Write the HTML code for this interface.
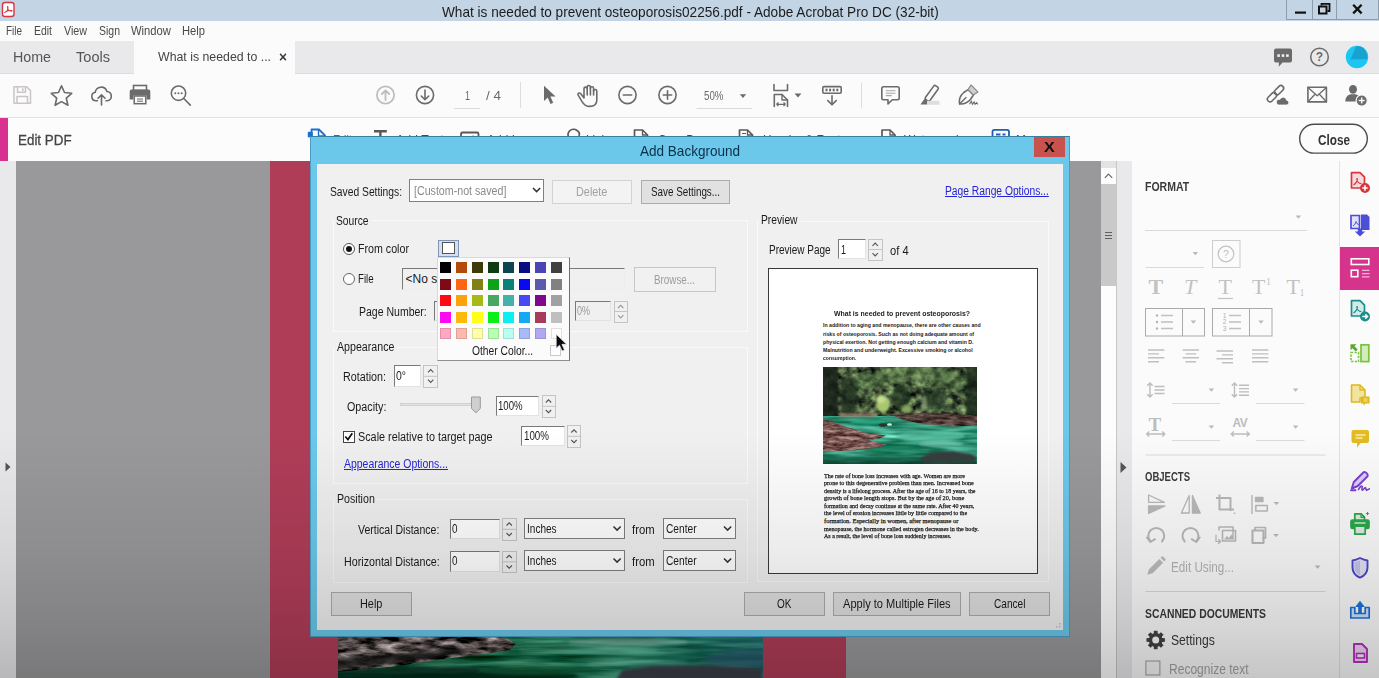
<!DOCTYPE html>
<html lang="en"><head><meta charset="utf-8"><title>Add Background</title>
<style>
html,body{margin:0;padding:0}
body{width:1379px;height:678px;overflow:hidden;position:relative;background:#99999b;font-family:"Liberation Sans",sans-serif;color:#333}
.a{position:absolute}
.t{position:absolute;white-space:nowrap;line-height:16px;height:16px;font-size:12px;transform-origin:0 50%}
svg{position:absolute;overflow:visible}
.ic{fill:none;stroke:#6b6b6b;stroke-width:1.6;stroke-linecap:round;stroke-linejoin:round}
.dl{color:#1a1a1a}
.btn{position:absolute;box-sizing:border-box;border:1px solid #acacac;background:#e1e1e1;text-align:center;font-size:12px;color:#1a1a1a}
.inp{position:absolute;box-sizing:border-box;background:#fff;border:1px solid #e3e3e3;border-top-color:#7a7a7a;border-left-color:#7a7a7a}
.sel{position:absolute;box-sizing:border-box;background:#fff;border:1px solid #7f7f86}
.spin{position:absolute;box-sizing:border-box;border:1px solid #c4c4c4;background:#f0f0f0}
.grp{position:absolute;box-sizing:border-box;border:1px solid #fafafa;box-shadow:inset 0 0 0 0 #ddd}
</style></head><body>

<!-- ===== title bar ===== -->
<div class="a" id="titlebar" style="left:0;top:0;width:1379px;height:21px;background:#c3d4e4"></div>
<!-- ===== menu bar ===== -->
<div class="a" id="menubar" style="left:0;top:21px;width:1379px;height:20px;background:#fbfbfb"></div>
<!-- ===== tab bar ===== -->
<div class="a" id="tabbar" style="left:0;top:41px;width:1379px;height:33px;background:#e9e9eb;border-bottom:1px solid #dcdcde;box-sizing:border-box"></div>
<div class="a" id="activetab" style="left:134px;top:41px;width:161px;height:33px;background:#fbfbfb"></div>
<!-- ===== toolbar ===== -->
<div class="a" id="toolbar" style="left:0;top:74px;width:1379px;height:43px;background:#fbfbfb"></div>
<div class="a" style="left:0;top:117px;width:1379px;height:1px;background:#e2e2e2"></div>
<!-- ===== edit pdf bar ===== -->
<div class="a" id="editbar" style="left:0;top:118px;width:1379px;height:43px;background:#fcfcfc"></div>
<div class="a" style="left:0;top:117.500px;width:8.400px;height:43px;background:#d9318f"></div>

<!-- ===== document area ===== -->
<div class="a" id="leftstrip" style="left:0;top:161px;width:16px;height:517px;background:#e9e8eb"></div>
<div class="a" id="page" style="left:270px;top:161px;width:576px;height:517px;background:#b03d58"></div>

<svg id="docphoto" class="a" style="left:338px;top:630px;overflow:hidden" width="425" height="48" viewBox="0 0 425 48">
<defs>
<filter id="bl3" x="-5%" y="-30%" width="110%" height="160%"><feGaussianBlur stdDeviation="1.600"/></filter>
<filter id="bl4" x="-5%" y="-30%" width="110%" height="160%"><feGaussianBlur stdDeviation="0.700"/></filter>
<filter id="water2" color-interpolation-filters="sRGB" x="0" y="0" width="100%" height="100%"><feTurbulence type="fractalNoise" baseFrequency="0.012 0.16" numOctaves="3" seed="9"/><feColorMatrix type="matrix" values="0.9 0 0 0 -0.33  0.95 0 0 0 0.0  0.9 0 0 0 -0.12  0 0 0 0 1"/></filter>
<filter id="rock2" color-interpolation-filters="sRGB" x="0" y="0" width="100%" height="100%"><feTurbulence type="fractalNoise" baseFrequency="0.05 0.16" numOctaves="4" seed="21"/><feColorMatrix type="matrix" values="1.7 0 0 0 -0.50  1.6 0 0 0 -0.49  1.6 0 0 0 -0.49  0 0 0 0 1"/></filter>
<clipPath id="cpK"><path d="M-2 4h150l22 5l8 5l-6 6l-26 4l-40 5l-46 7l-40 4l-24 2z"/></clipPath>
<linearGradient id="wg2" x1="0" y1="0" x2="1" y2="0"><stop offset="0" stop-color="#0d4a30" stop-opacity=".55"/><stop offset=".35" stop-color="#0d4a30" stop-opacity=".1"/><stop offset=".7" stop-color="#2f8a86" stop-opacity=".25"/><stop offset="1" stop-color="#22607a" stop-opacity=".6"/></linearGradient>
</defs>
<g filter="url(#bl4)">
<rect x="0" y="0" width="425" height="48" filter="url(#water2)"/>
<rect x="0" y="0" width="425" height="48" fill="url(#wg2)"/>
<g filter="url(#bl3)">
<ellipse cx="290" cy="12" rx="60" ry="4" fill="#9fd6c4" opacity=".6"/>
<ellipse cx="250" cy="20" rx="70" ry="3" fill="#5fb89c" opacity=".55"/>
<ellipse cx="300" cy="33" rx="50" ry="2.500" fill="#6cc0aa" opacity=".45"/>
<ellipse cx="110" cy="46" rx="130" ry="9" fill="#08281a" opacity=".8"/>
<ellipse cx="200" cy="40" rx="60" ry="5" fill="#106a40" opacity=".6"/>
</g>
<g clip-path="url(#cpK)"><rect x="-2" y="0" width="190" height="48" filter="url(#rock2)"/></g>
<path d="M-2 28l50-3l60-6l40-3l-30 8l-50 8l-70 8z" fill="#1c1a1a" opacity=".75" filter="url(#bl3)"/>
<path d="M278 50l6-10l30-4l60-1l50 3v12z" fill="#3a3e47" filter="url(#bl3)"/>
<path d="M360 30l30-8l36-2v16l-40 0z" fill="#2c5a70" opacity=".7" filter="url(#bl3)"/>
</g>
</svg>
<svg id="topsvg" class="a" style="left:0;top:0" width="1379" height="161" viewBox="0 0 1379 161">
<!-- app icon -->
<rect x="2.5" y="2.5" width="11.5" height="14" rx="2.5" fill="#fff" stroke="#d8363e" stroke-width="1.4"/>
<path d="M4.5 12.5c2-.6 3.2-2.6 3.6-5.3c.2-1.2-.9-1.3-.8-.1c.3 2.700 2.400 4.300 4.800 4.200c.9-.5-.3-1.100-1.700-.9c-2 .3-4.100 1.100-5.900 2.100z" fill="#d8363e" stroke="#d8363e" stroke-width=".8" stroke-linejoin="round"/>
<!-- window controls -->
<g fill="none" stroke="#8d9cab" stroke-width="1"><path d="M1286.500 0V19.500H1378.500V0M1312.500 0V19.500M1336.500 0V19.500"/></g>
<rect x="1295" y="11.500" width="11" height="2.200" fill="#111"/>
<path d="M1321.500 5.500V3.800H1329.500V11H1327.500" fill="none" stroke="#111" stroke-width="1.800"/>
<rect x="1319" y="6.500" width="7.500" height="7" fill="none" stroke="#111" stroke-width="2"/>
<path d="M1353.200 4.800L1361.600 13.400M1361.600 4.800L1353.200 13.400" stroke="#111" stroke-width="2.300"/>

<!-- tab bar right icons -->
<path d="M1276 48.500h14a2 2 0 0 1 2 2v10a2 2 0 0 1-2 2h-7.500l-3.800 4.300l.3-4.300h-3a2 2 0 0 1-2-2v-10a2 2 0 0 1 2-2z" fill="#6b6b6b"/>
<g fill="#f0f0f0"><rect x="1277.300" y="54.300" width="2.600" height="2.600"/><rect x="1281.700" y="54.300" width="2.600" height="2.600"/><rect x="1286.100" y="54.300" width="2.600" height="2.600"/></g>
<circle cx="1319.500" cy="57" r="8.800" fill="none" stroke="#6b6b6b" stroke-width="1.500"/>
<text x="1319.500" y="61.300" font-family="Liberation Sans,sans-serif" font-size="12" font-weight="bold" fill="#6b6b6b" text-anchor="middle">?</text>
<circle cx="1357" cy="57" r="11.200" fill="#1cc6f2"/>
<path d="M1356 46.500c3.500-.8 7.500 1 9.500 4.200c2 3.200 2 6.500 1.500 8.300l-16.500 .5z" fill="#17a2d0"/>

<!-- toolbar left -->
<g fill="none" stroke="#c9c5c7" stroke-width="1.500" stroke-linejoin="round">
<path d="M14 86.800h12.700l3.800 3.800v12.600h-16.500z"/><path d="M17.500 87v5.300h8v-5.300M17 103v-6.500h10.500v6.500"/><path d="M22.800 88.300v2.800"/>
</g>
<path d="M61.500 85.800l3 6.700l7.200 .8l-5.400 4.900l1.600 7.100l-6.400-3.700l-6.400 3.700l1.600-7.100l-5.400-4.900l7.200-.8z" class="ic" stroke-width="1.900"/>
<g class="ic" stroke-width="1.900"><path d="M97.500 100.800h-1.500a4.300 4.300 0 0 1-.8-8.500a6 6 0 0 1 11.700-.8a4.700 4.700 0 0 1 .6 9.300h-1.500"/><path d="M101.500 105v-9.500M98 98.300l3.500-3.500l3.500 3.500"/></g>
<g><rect x="133.500" y="85.500" width="13" height="5" fill="none" stroke="#6b6b6b" stroke-width="1.600"/><path d="M131.500 89.500h17a1.800 1.800 0 0 1 1.800 1.800v8.200h-3.600v-4h-13.400v4h-3.600v-8.200a1.800 1.800 0 0 1 1.800-1.800z" fill="#6b6b6b"/><rect x="134.200" y="96" width="11.600" height="7.700" fill="none" stroke="#6b6b6b" stroke-width="1.500"/><path d="M137 99h6M137 101.200h6" stroke="#6b6b6b" stroke-width="1"/></g>
<g class="ic" stroke-width="2"><circle cx="178.500" cy="93.200" r="7.200"/><path d="M184 98.800l6.300 6.300"/></g>
<g fill="#6b6b6b"><circle cx="175.300" cy="93.300" r="1"/><circle cx="178.500" cy="93.300" r="1"/><circle cx="181.700" cy="93.300" r="1"/></g>

<!-- page nav -->
<g fill="none" stroke="#bdbdbd" stroke-width="1.800" stroke-linecap="round" stroke-linejoin="round"><circle cx="385.500" cy="95" r="8.600"/><path d="M385.500 100v-9.500M381.800 94l3.700-3.700l3.700 3.700"/></g>
<g class="ic" stroke-width="1.900"><circle cx="425" cy="95" r="8.600"/><path d="M425 90v9.500M421.300 96l3.700 3.700l3.700-3.700"/></g>
<path d="M454 108.500h26" stroke="#d9d9d9" stroke-width="1"/>
<path d="M520.500 82v26" stroke="#dedede" stroke-width="1"/>
<!-- select arrow -->
<path d="M544 85.800v15.200l3.700-3.400l2.800 6.400l2.700-1.200l-2.800-6.200h5.200z" fill="#6b6b6b"/>
<!-- hand -->
<path d="M584 98V88.600c0-2 3.200-2 3.200 0V87c0-2 3.200-2 3.200 0v1.200c0-2 3.200-2 3.200 0V91c0-2 3.200-2 3.200 0V100c0 4-2.600 6.400-7 6.400c-3.800 0-5.800-1.600-7.600-4.600l-4-6.600c-1-1.700 1.200-3 2.400-1.600z" class="ic" stroke-width="1.800"/>
<path d="M587.200 88.600V95M590.400 88V95M593.600 90.500V95" class="ic" stroke-width="1.600"/>
<!-- zoom out / in -->
<g class="ic" stroke-width="1.900"><circle cx="627.500" cy="95" r="8.600"/><path d="M623.300 95h8.400"/></g>
<g class="ic" stroke-width="1.900"><circle cx="667.500" cy="95" r="8.600"/><path d="M663.300 95h8.400M667.500 90.800v8.400"/></g>
<path d="M696.500 108.500h55.500" stroke="#d9d9d9" stroke-width="1"/>
<path d="M739.800 94.200h6.400l-3.200 3.800z" fill="#6b6b6b"/>
<!-- fit page -->
<g class="ic" stroke-width="1.900" stroke-linecap="butt"><path d="M774 84.500v6h13.500v-6"/><path d="M774.300 106.500v-12h7.700l5.500 5.500v6.500"/><path d="M782 94.500v5.500h5.500" stroke-width="1.400"/></g>
<path d="M776.500 104.300h9M776.500 104.300l2-1.800M776.500 104.300l2 1.800M785.500 104.300l-2-1.800M785.500 104.300l-2 1.800" stroke="#6b6b6b" stroke-width="1.200" fill="none"/>
<path d="M794.600 93.600h6.800l-3.400 4z" fill="#6b6b6b"/>
<!-- scroll keyboard -->
<g class="ic" stroke-width="1.800"><rect x="822.800" y="86.600" width="18.400" height="6.600" rx="1.200"/><path d="M832 95.800v8.600M827.800 100.600l4.200 4.200l4.200-4.200"/></g>
<g fill="#6b6b6b"><rect x="825.500" y="88.700" width="2" height="2.600"/><rect x="829.100" y="88.700" width="2" height="2.600"/><rect x="832.700" y="88.700" width="2" height="2.600"/><rect x="836.300" y="88.700" width="2" height="2.600"/></g>
<path d="M861.500 83v25.500" stroke="#dedede" stroke-width="1"/>
<!-- comment -->
<path d="M883.500 86.800h14a1.700 1.700 0 0 1 1.700 1.700v9.500a1.700 1.700 0 0 1-1.700 1.700h-5.200l-4.300 4.300v-4.300h-4.500a1.700 1.700 0 0 1-1.700-1.700v-9.500a1.700 1.700 0 0 1 1.700-1.700z" class="ic" stroke-width="1.900"/>
<path d="M885.800 90.800h9.600M885.800 93.200h9.600M885.800 95.600h6" stroke="#a5a5a5" stroke-width="1.100"/>
<!-- highlighter -->
<rect x="-8.500" y="-2.700" width="17" height="5.400" rx="1.600" transform="translate(931.800 93.300) rotate(-54)" class="ic" stroke-width="1.800"/>
<path d="M924.800 98.600l4.600 3.400l-2.600 2.600h-6.400z" fill="#6b6b6b"/>
<rect x="927" y="100.800" width="12.500" height="4" fill="#dedede"/>
<!-- sign pen -->
<g class="ic" stroke-width="1.800"><path d="M959.600 104c-.8-4.500 1-8.800 4.200-11.500l4.300-2.800l5.300 5.300l-2.800 4.300c-2.700 3.200-7 5-11 4.700z"/><path d="M959.800 103.800l6.200-6.200" stroke-width="1.400"/></g>
<path d="M968 89.600l3-4.600l6.900 6.900l-4.600 3z" fill="#cfcfcf" stroke="#8a8a8a" stroke-width="1.200" stroke-linejoin="round"/>
<path d="M969.500 104.300l1.800-3l1.200 3l1.600-2.400l1 2.400l1.400-1.700l1.400 1.700" fill="none" stroke="#6b6b6b" stroke-width="1.100"/>
<!-- link cloud -->
<g class="ic" stroke-width="1.900"><rect x="-5.400" y="-2.700" width="10.800" height="5.400" rx="2.700" transform="translate(1279 90.200) rotate(-45)"/><rect x="-5.400" y="-2.700" width="10.800" height="5.400" rx="2.700" transform="translate(1272 97.200) rotate(-45)"/></g>
<path d="M1278.500 105h7.800a2.400 2.400 0 0 0 .3-4.800a3.400 3.400 0 0 0-6.500-.9a2.900 2.900 0 0 0-1.600 5.700z" fill="#6b6b6b" stroke="#fbfbfb" stroke-width=".8"/>
<!-- mail -->
<g class="ic" stroke-width="1.700" stroke-linejoin="miter"><rect x="1307.900" y="87.300" width="18.500" height="14.600"/><path d="M1308 87.500l9.200 8.300l9.200-8.300M1308 101.800l7-7.600M1326.400 101.800l-7-7.600" stroke-width="1.300"/></g>
<!-- person + -->
<ellipse cx="1353" cy="89.300" rx="4" ry="4.400" fill="#6b6b6b"/>
<path d="M1345.300 101.500c0-4.500 2.500-6.800 5.500-7.300h4.400c3 .5 5.500 2.800 5.500 7.300z" fill="#6b6b6b"/>
<circle cx="1361.700" cy="100.600" r="5.600" fill="#6b6b6b" stroke="#fbfbfb" stroke-width="1.200"/>
<path d="M1358.700 100.600h6M1361.700 97.600v6" stroke="#f4f4f4" stroke-width="1.500"/>
<!-- edit pdf bar icons (mostly hidden behind dialog) -->
<g fill="none" stroke="#1a6fd4" stroke-width="1.800" stroke-linejoin="round"><path d="M311.500 148v-18.500h7.500l6 6v12.500z"/><path d="M318.500 129.500v6.500h6.500" stroke-width="1.400"/></g>
<rect x="307.800" y="131.800" width="5" height="5.500" fill="#1a6fd4"/>
<path d="M374 130h12.800v2.400h-5.200v15.600h-2.400v-15.600h-5.200z" fill="#595959"/>
<g fill="none" stroke="#595959" stroke-width="1.800"><rect x="461" y="132.500" width="17.500" height="14.500" rx="1.500"/></g><circle cx="473" cy="137" r="1.500" fill="#595959"/>
<g fill="none" stroke="#595959" stroke-width="1.700"><path d="M570 139a5 5 0 0 1 7-8.500a4.500 4.500 0 0 1 2 5.500"/>
<path d="M634.500 148v-18h8l5 5v13z" stroke-linejoin="round"/><path d="M642.500 130v5h5" stroke-width="1.300"/>
<path d="M739.500 148v-18h8l5 5v13z" stroke-linejoin="round"/><path d="M747.500 130v5h5" stroke-width="1.300"/><path d="M742 133.500h4M742 136.500h4" stroke-width="1.100"/>
<path d="M882 148v-18h8l5 5v13z" stroke-linejoin="round"/><path d="M890 130v5h5" stroke-width="1.300"/></g>
<rect x="992.500" y="129.800" width="16.500" height="16" rx="2" fill="none" stroke="#1a5fb8" stroke-width="1.800"/><path d="M996 134.500h4.500M1002.500 134.500h3" stroke="#1a5fb8" stroke-width="2"/>
<!-- close pill -->
<rect x="1299.700" y="124.300" width="67.600" height="28.800" rx="14.400" fill="none" stroke="#4d4d4d" stroke-width="1.400"/>
</svg>
<span class="t" id="e1" style="left:333.0px;top:130.5px;font-size:13px;line-height:17px;height:17px;color:#1a73d9;transform:scaleX(0.848);">Edit</span>
<span class="t" id="e2" style="left:395.7px;top:130.5px;font-size:13px;line-height:17px;height:17px;color:#4a4a4a;transform:scaleX(0.949);">Add Text</span>
<span class="t" id="e3" style="left:487.0px;top:130.5px;font-size:13px;line-height:17px;height:17px;color:#4a4a4a;transform:scaleX(0.922);">Add Image</span>
<span class="t" id="e4" style="left:585.6px;top:130.5px;font-size:13px;line-height:17px;height:17px;color:#4a4a4a;transform:scaleX(0.897);">Link</span>
<span class="t" id="e5" style="left:658.0px;top:130.5px;font-size:13px;line-height:17px;height:17px;color:#4a4a4a;transform:scaleX(0.888);">Crop Pages</span>
<span class="t" id="e6" style="left:763.0px;top:130.5px;font-size:13px;line-height:17px;height:17px;color:#4a4a4a;transform:scaleX(0.916);">Header &amp; Footer</span>
<span class="t" id="e7" style="left:904.0px;top:130.5px;font-size:13px;line-height:17px;height:17px;color:#4a4a4a;transform:scaleX(0.919);">Watermark</span>
<span class="t" id="e8" style="left:1016.0px;top:130.5px;font-size:13px;line-height:17px;height:17px;color:#4a4a4a;transform:scaleX(0.911);">More</span>
<!-- ===== scrollbar + right panel ===== -->
<div class="a" id="vscroll" style="left:1101px;top:161px;width:15px;height:517px;background:#fdfdfd"></div>
<div class="a" style="left:1101px;top:161px;width:15px;height:7px;background:#e3e3e3"></div>
<div class="a" style="left:1101px;top:184px;width:15px;height:102px;background:#c9c9c9"></div>
<div class="a" id="colstrip" style="left:1116px;top:161px;width:16px;height:517px;background:#e9e8eb;border-left:1px solid #c6c6c6;box-sizing:border-box"></div>
<div class="a" id="panel" style="left:1132px;top:161px;width:207px;height:517px;background:#fbfbfb"></div>
<div class="a" style="left:1339px;top:161px;width:1px;height:517px;background:#e2e2e2"></div>
<div class="a" id="rstrip" style="left:1340px;top:161px;width:39px;height:517px;background:#fbfbfb"></div>
<div class="a" style="left:1339.500px;top:247px;width:39.500px;height:42.500px;background:#d6338c"></div>
<span class="t" style="left:1148.400px;top:275px;font-family:'Liberation Serif',serif;font-size:22px;line-height:24px;height:24px;font-weight:bold;color:#c2c2c2">T</span>
<span class="t" style="left:1184px;top:275px;font-family:'Liberation Serif',serif;font-size:22px;line-height:24px;height:24px;font-style:italic;color:#c2c2c2">T</span>
<span class="t" style="left:1218.500px;top:275px;font-family:'Liberation Serif',serif;font-size:22px;line-height:24px;height:24px;color:#c2c2c2">T</span>
<span class="t" style="left:1252px;top:275px;font-family:'Liberation Serif',serif;font-size:22px;line-height:24px;height:24px;color:#c2c2c2">T</span>
<span class="t" style="left:1266px;top:276px;font-family:'Liberation Serif',serif;font-size:10px;line-height:12px;height:12px;color:#c2c2c2">1</span>
<span class="t" style="left:1286.600px;top:275px;font-family:'Liberation Serif',serif;font-size:22px;line-height:24px;height:24px;color:#c2c2c2">T</span>
<span class="t" style="left:1299.500px;top:287px;font-family:'Liberation Serif',serif;font-size:10px;line-height:12px;height:12px;color:#c2c2c2">1</span>
<span class="t" style="left:1148.500px;top:414.500px;font-family:'Liberation Serif',serif;font-size:19px;line-height:20px;height:20px;font-weight:bold;color:#bdbdbd">T</span>
<span class="t" style="left:1232.500px;top:416px;font-size:12px;line-height:14px;height:14px;font-weight:bold;color:#bdbdbd;letter-spacing:-.5px">AV</span>
<svg id="rpsvg" class="a" style="left:0;top:0" width="1379" height="678" viewBox="0 0 1379 678">
<!-- scrollbar glyphs -->
<path d="M1104.800 177.800l3.700-3.700l3.700 3.700" fill="none" stroke="#6a6a6a" stroke-width="1.200"/>
<path d="M1105 232.500h7M1105 235.500h7M1105 238.500h7" stroke="#5f5f5f" stroke-width="1.100"/>
<path d="M1120.500 462l6 5.500l-6 5.500z" fill="#555"/>
<!-- format dropdowns -->
<g fill="#b9b9b9"><path d="M1295.600 215.500h5.600l-2.800 3.300z"/><path d="M1192.600 252h5.600l-2.800 3.300z"/><path d="M1208.600 388.500h5.600l-2.800 3.300z"/><path d="M1292.800 388.500h5.600l-2.800 3.300z"/><path d="M1208.600 425.500h5.600l-2.800 3.300z"/><path d="M1292.800 425.500h5.600l-2.800 3.300z"/><path d="M1190.600 320.500h5.600l-2.800 3.300z"/><path d="M1258.200 320.500h5.600l-2.800 3.300z"/><path d="M1273.600 502h5.600l-2.800 3.300z"/><path d="M1273.200 534h5.600l-2.800 3.300z"/><path d="M1314.800 565.500h5.600l-2.800 3.300z"/></g>
<g stroke="#dadada" stroke-width="1" fill="none"><path d="M1145 230.500h162M1145.500 267.500h58.500M1172 403.500h48M1256 403.500h48.500M1172 440.500h48M1256 440.500h48.500M1145.500 455h180M1145.500 591.500h180"/></g>
<!-- help box -->
<rect x="1212.500" y="240.500" width="27.500" height="27" fill="none" stroke="#cdcdcd"/>
<circle cx="1226" cy="254" r="7.800" fill="none" stroke="#c2c2c2" stroke-width="1.200"/>
<text x="1226" y="257.800" font-family="Liberation Sans,sans-serif" font-size="10.500" fill="#c2c2c2" text-anchor="middle">?</text>
<path d="M1218 298.500h15" stroke="#c2c2c2" stroke-width="1.200"/>
<!-- list boxes -->
<g fill="none" stroke="#aaa" stroke-width="1"><rect x="1145.500" y="308.500" width="59" height="27.500"/><path d="M1182.500 308.500v27.500"/><rect x="1212.500" y="308.500" width="59.500" height="27.500"/><path d="M1249.500 308.500v27.500"/></g>
<g stroke="#c0c0c0" stroke-width="1.300" fill="none"><path d="M1161 315.500h12M1161 322h12M1161 328.500h12M1229 315.500h12M1229 322h12M1229 328.500h12"/></g>
<g fill="#b5b5b5"><circle cx="1157" cy="315.500" r="1.200"/><circle cx="1157" cy="322" r="1.200"/><circle cx="1157" cy="328.500" r="1.200"/></g>
<g font-family="Liberation Sans,sans-serif" font-size="6.500" fill="#b0b0b0" text-anchor="middle"><text x="1224.500" y="317.800">1</text><text x="1224.500" y="324.300">2</text><text x="1224.500" y="330.800">3</text></g>
<!-- align -->
<g stroke="#c0c0c0" stroke-width="1.400" fill="none">
<path d="M1148 350h16.400M1148 353.900h11M1148 357.800h16.400M1148 361.700h11"/>
<path d="M1182.600 350h16.400M1185.500 353.900h10.600M1182.600 357.800h16.400M1185.500 361.700h10.600"/>
<path d="M1216.500 351h16.500M1222 354.900h11M1216.500 358.800h16.500M1222 362.700h11"/>
<path d="M1252 350h16.400M1252 353.900h16.400M1252 357.800h16.400M1252 361.700h16.400"/>
</g>
<!-- line spacing -->
<g stroke="#bdbdbd" stroke-width="1.400" fill="none">
<path d="M1150 383.500v13M1147.300 385.800l2.700-2.800l2.700 2.800M1147.300 394.200l2.700 2.800l2.700-2.800"/><path d="M1154.500 386.500h10M1154.500 390h10M1154.500 393.500h10"/>
<path d="M1234.500 383.500v13M1231.800 385.800l2.700-2.800l2.700 2.800M1231.800 394.200l2.700 2.800l2.700-2.800"/><path d="M1239 385.300h10M1239 388.600h10M1239 391.900h10M1239 395.200h10"/>
<path d="M1147 434h17.500M1149.300 431.600l-2.600 2.400l2.600 2.400M1162.200 431.600l2.600 2.400l-2.600 2.400"/>
<path d="M1231.500 434h17.500M1233.800 431.600l-2.600 2.400l2.600 2.400M1246.700 431.600l2.600 2.400l-2.600 2.400"/>
</g>
<!-- objects row 1 -->
<g fill="none" stroke="#b9b9b9" stroke-width="1.300" stroke-linejoin="round">
<path d="M1148.600 495l15.800 7.300h-15.800z"/><path d="M1148.600 506h16.400l-16.400 7.400z" fill="#b9b9b9"/>
<path d="M1189.200 495.500v17.500h-7.800z"/><path d="M1192.400 495.500v17.500h7.800z" fill="#b9b9b9"/>
<path d="M1219.500 494.500v15h14.500M1216 498h14.500v13" stroke-width="2"/><path d="M1234.500 512.500v1.500" stroke-width="1.500"/>
<path d="M1252 495v19" stroke-width="1.400"/><rect x="1255.500" y="497.500" width="7.500" height="4" fill="#b9b9b9"/><rect x="1255.800" y="505.500" width="11.500" height="5.500" stroke-width="1.500"/>
</g>
<!-- objects row 2 -->
<g fill="none" stroke="#b9b9b9" stroke-width="2" stroke-linecap="round" stroke-linejoin="round">
<path d="M1150.500 541.500a8 8 0 1 1 11.500 0"/><path d="M1147 537.500l3.300 4.500l4.700-2.800" />
<path d="M1196.200 541.500a8 8 0 1 0-11.500 0"/><path d="M1199.700 537.500l-3.300 4.500l-4.700-2.800"/>
<path d="M1219 530v-3h14v10h-2" stroke-width="1.500"/><rect x="1222.500" y="530.500" width="13" height="10.500" stroke-width="1.600"/><path d="M1224 539.500l3-3.500l2 2l2.500-3.500l3 5z" fill="#b9b9b9" stroke="none"/><path d="M1216 535v6.500h4.500M1218.500 539.500l2.200 2l-2.200 2" stroke-width="1.200"/>
<path d="M1255 530v-2.500h10.500v10.500h-2.500" stroke-width="1.700"/><rect x="1252.500" y="530.500" width="11" height="12.500" stroke-width="2.100"/>
</g>
<!-- pencil -->
<path d="M1147.300 574.800l1.500-5.300l10.500-10.500l3.800 3.800l-10.500 10.500z M1160.500 557.800l1-1a1.300 1.300 0 0 1 1.800 0l2 2a1.300 1.300 0 0 1 0 1.800l-1 1z" fill="#bdbdbd"/>
<!-- gear -->
<g transform="translate(1155.700 640)"><circle r="5.200" fill="none" stroke="#424242" stroke-width="3.400"/><g fill="#424242"><rect x="-1.900" y="-9.200" width="3.800" height="4"/><rect x="-1.900" y="5.200" width="3.800" height="4"/><rect x="-9.200" y="-1.900" width="4" height="3.800"/><rect x="5.200" y="-1.900" width="4" height="3.800"/><g transform="rotate(45)"><rect x="-1.900" y="-9.200" width="3.800" height="4"/><rect x="-1.900" y="5.200" width="3.800" height="4"/><rect x="-9.200" y="-1.900" width="4" height="3.800"/><rect x="5.200" y="-1.900" width="4" height="3.800"/></g></g></g>
<rect x="1145.900" y="661" width="14" height="14" fill="#f7f7f7" stroke="#999" stroke-width="1"/>

<!-- ===== right tool strip icons ===== -->
<!-- 1 create pdf -->
<g fill="none" stroke="#d7373f" stroke-width="1.700" stroke-linejoin="round"><path d="M1361 188h-9.500v-15.300h8.500l4.500 4.500v6l-3.500 5z" fill="#f7dadd"/><path d="M1353.500 185c2-1 3.500-3.200 4-5.800c.2-1-.8-1-.7 0c.3 2.600 2.200 4.300 4.700 4.300" stroke-width="1.100"/></g>
<circle cx="1365" cy="188" r="5" fill="#d7373f"/><path d="M1362.300 188h5.400M1365 185.300v5.400" stroke="#fff" stroke-width="1.500"/>
<!-- 2 export pdf -->
<path d="M1361 214.500h6l2.500 2.500v13h-8.500z" fill="#4b4fd6"/>
<path d="M1351 215.500h8.500v13h-8.500z" fill="#e0e0fa" stroke="#4b4fd6" stroke-width="1.700"/>
<path d="M1353 226c1.500-.8 2.600-2.500 3-4.500c.5 2 1.700 3 3.300 3.200" fill="none" stroke="#4b4fd6" stroke-width="1"/>
<path d="M1357.800 228.500h4.400v3h3l-5.200 5l-5.200-5h3z" fill="#4b4fd6"/>
<!-- 3 edit pdf (selected) -->
<g fill="none" stroke="#fff" stroke-width="1.600"><rect x="1351.300" y="258.800" width="17.500" height="5.700"/><rect x="1351.300" y="270.200" width="6.500" height="6.500"/><path d="M1362 270.300h7.500M1362 273.600h7.500M1362 276.900h7.500" stroke-width="1.200" stroke="#f4b6d6"/></g>
<!-- 4 -->
<g fill="none" stroke="#1a8f8a" stroke-width="1.700" stroke-linejoin="round"><path d="M1361 316h-9.500v-15.300h8.500l4.500 4.500v6l-3.500 5z" fill="#d2eae8"/><path d="M1353.500 313c2-1 3.500-3.200 4-5.800c.2-1-.8-1-.7 0c.3 2.600 2.200 4.300 4.700 4.300" stroke-width="1.100"/></g>
<circle cx="1365" cy="316.500" r="5" fill="#1a8f8a"/><path d="M1362.300 316.500h5M1365.300 314.300l2.300 2.200l-2.300 2.200" stroke="#fff" stroke-width="1.400" fill="none"/>
<!-- 5 organize -->
<rect x="1361" y="344.800" width="7.800" height="16.800" fill="#d5edba" stroke="#7ac142" stroke-width="1.700"/>
<rect x="1351" y="352.500" width="7.500" height="9" fill="none" stroke="#7ac142" stroke-width="1.600" stroke-dasharray="2.200 1.400"/>
<path d="M1350.500 344.300h6l-2 2l3.200 3.200l-2 2l-3.200-3.200l-2 2z" fill="#5aa832"/>
<!-- 6 -->
<path d="M1351.500 385h8.500l5 5v8h-5v4h-8.500z" fill="#f3e3a0" stroke="#e0b81a" stroke-width="1.600" stroke-linejoin="round"/>
<path d="M1360 385v5h5" fill="none" stroke="#e0b81a" stroke-width="1.300"/>
<path d="M1361 396.500h8.500v7h-4l-2 2.200v-2.200h-2.500z" fill="#e0b81a"/>
<path d="M1363.500 399h4M1363.500 401h4" stroke="#f7ecc0" stroke-width=".9"/>
<!-- 7 comment -->
<path d="M1353.500 430h13.500a2 2 0 0 1 2 2v9a2 2 0 0 1-2 2h-6.200l-3.800 4.500v-4.500h-3.500a2 2 0 0 1-2-2v-9a2 2 0 0 1 2-2z" fill="#e3bb22"/>
<path d="M1355.500 435h10M1355.500 438h7" stroke="#f8edc0" stroke-width="1.400"/>
<!-- 8 sign -->
<g fill="none" stroke="#7a3fd1" stroke-width="1.900" stroke-linejoin="round" stroke-linecap="round"><path d="M1351.800 488.500l2-6.500l9.500-9.500c1.800-1.800 5.800 2.200 4 4l-9.500 9.500z" fill="#dccdf6"/><path d="M1351 490.300h4.500"/><path d="M1358.500 489.500c1.500-2.500 2.800-4 3.600-3.200c.8 .8-1 3.300 0 3.800c1.200.5 2.200-2.800 3.400-2.300c1 .5-.2 2.100 1 2.300c.8.100 1.800-.6 2.800-1.300" stroke-width="1.600"/></g>
<!-- 9 print production -->
<g fill="none" stroke="#2aa84a" stroke-width="1.700" stroke-linejoin="round"><path d="M1354.800 520v-6.200h6.400l3.300 3.300v2.900" fill="#d8f0dd"/><path d="M1361 513.800v3.500h3.500" stroke-width="1.200"/><rect x="1351" y="520" width="18" height="8.500" rx="1.500" fill="#2aa84a"/><rect x="1354.800" y="526.200" width="10.400" height="8" fill="#dfe9e1"/><path d="M1367.500 512v3.200M1365.900 513.600h3.200" stroke-width="1"/></g>
<path d="M1354.500 523h11" stroke="#d8f0dd" stroke-width="1.400"/>
<!-- 10 shield -->
<path d="M1352.500 560.500c2.500-.3 5-1.200 7.500-2.500c2.500 1.300 5 2.200 7.500 2.500v7c0 5-3 8.300-7.500 10.200c-4.500-1.900-7.500-5.200-7.500-10.200z" fill="#e2e1f6" stroke="#4a48c8" stroke-width="1.900" stroke-linejoin="round"/>
<path d="M1360 560.500v14.800c-3.500-1.700-5.500-4.300-5.500-8v-5.300c2-.2 3.800-.7 5.500-1.500z" fill="#c4c3ec"/>
<!-- 11 share -->
<path d="M1350.800 607.500v10.500h18.400v-10.500h-4v6h-10.400v-6z" fill="#cfe0f6" stroke="#1a73d9" stroke-width="1.700" stroke-linejoin="round"/>
<path d="M1358.200 613v-6h-3l4.800-6.300l4.800 6.300h-3v6z" fill="#1a73d9"/>
<!-- 12 -->
<path d="M1354 644h8l5 5v13h-13z" fill="#f1d6f2" stroke="#b82fc0" stroke-width="1.900" stroke-linejoin="round"/>
<rect x="1356.500" y="653.500" width="8" height="4.500" fill="#fbf0fb" stroke="#b82fc0" stroke-width="1.600"/>
</svg>

<span class="t" id="ttl" style="left:441.5px;top:1.6px;font-size:15px;line-height:20px;height:20px;color:#1c1c1c;transform:scaleX(0.908);">What is needed to prevent osteoporosis02256.pdf - Adobe Acrobat Pro DC (32-bit)</span>
<span class="t" id="m1" style="left:6.0px;top:23.0px;font-size:12px;line-height:16px;height:16px;color:#4a4a4a;transform:scaleX(0.827);">File</span>
<span class="t" id="m2" style="left:34.0px;top:23.0px;font-size:12px;line-height:16px;height:16px;color:#4a4a4a;transform:scaleX(0.870);">Edit</span>
<span class="t" id="m3" style="left:64.0px;top:23.0px;font-size:12px;line-height:16px;height:16px;color:#4a4a4a;transform:scaleX(0.892);">View</span>
<span class="t" id="m4" style="left:99.0px;top:23.0px;font-size:12px;line-height:16px;height:16px;color:#4a4a4a;transform:scaleX(0.874);">Sign</span>
<span class="t" id="m5" style="left:131.0px;top:23.0px;font-size:12px;line-height:16px;height:16px;color:#4a4a4a;transform:scaleX(0.937);">Window</span>
<span class="t" id="m6" style="left:182.0px;top:23.0px;font-size:12px;line-height:16px;height:16px;color:#4a4a4a;transform:scaleX(0.932);">Help</span>
<span class="t" id="home" style="left:13.0px;top:47.1px;font-size:15px;line-height:20px;height:20px;color:#555;transform:scaleX(0.950);">Home</span>
<span class="t" id="tools" style="left:76.0px;top:47.1px;font-size:15px;line-height:20px;height:20px;color:#555;transform:scaleX(0.971);">Tools</span>
<span class="t" id="tab" style="left:158.0px;top:48.0px;font-size:13.5px;line-height:18px;height:18px;color:#444;transform:scaleX(0.913);">What is needed to ...</span>
<span class="t" id="tabx" style="left:279.0px;top:47.1px;font-size:15px;line-height:20px;height:20px;color:#3a3a3a;transform:scaleX(0.913);font-weight:bold;">×</span>
<span class="t" id="pg1" style="left:465.0px;top:88.0px;font-size:12px;line-height:16px;height:16px;color:#6a6a6a;transform:scaleX(0.750);">1</span>
<span class="t" id="pg4" style="left:486.0px;top:88.0px;font-size:12px;line-height:16px;height:16px;color:#6a6a6a;transform:scaleX(1.124);">/ 4</span>
<span class="t" id="zoom" style="left:703.6px;top:88.0px;font-size:12px;line-height:16px;height:16px;color:#6a6a6a;transform:scaleX(0.807);">50%</span>
<span class="t" id="editpdf" style="left:18.4px;top:130.1px;font-size:15px;line-height:20px;height:20px;color:#444;transform:scaleX(0.893);-webkit-text-stroke:0.3px #444;">Edit PDF</span>
<span class="t" id="close" style="left:1317.6px;top:130.6px;font-size:14px;line-height:18px;height:18px;color:#333;transform:scaleX(0.839);font-weight:bold;">Close</span>
<span class="t" id="fmt" style="left:1145.4px;top:179.0px;font-size:12px;line-height:16px;height:16px;color:#3a3a3a;transform:scaleX(0.876);font-weight:bold;">FORMAT</span>
<span class="t" id="obj" style="left:1145.0px;top:468.6px;font-size:12px;line-height:16px;height:16px;color:#3a3a3a;transform:scaleX(0.794);font-weight:bold;">OBJECTS</span>
<span class="t" id="scn" style="left:1145.0px;top:606.0px;font-size:12px;line-height:16px;height:16px;color:#3a3a3a;transform:scaleX(0.864);font-weight:bold;">SCANNED DOCUMENTS</span>
<span class="t" id="sett" style="left:1170.6px;top:631.0px;font-size:14px;line-height:18px;height:18px;color:#3a3a3a;transform:scaleX(0.866);">Settings</span>
<span class="t" id="recog" style="left:1169.4px;top:659.6px;font-size:14px;line-height:18px;height:18px;color:#a3a3a3;transform:scaleX(0.860);">Recognize text</span>
<span class="t" id="editusing" style="left:1171.0px;top:558.0px;font-size:14px;line-height:18px;height:18px;color:#b4b4b4;transform:scaleX(0.835);">Edit Using...</span>
<!-- ===== Add Background dialog ===== -->
<div class="a" id="dlg" style="left:310px;top:136px;width:760px;height:501px;background:#6bc8ea;box-sizing:border-box;border:1px solid #4b9dc4;border-top-color:#3b7f9f"></div>
<div class="a" id="dlgbody" style="left:317px;top:164px;width:746px;height:466px;background:#f0f0f0"></div>
<div class="a" id="dlgx" style="left:1033.500px;top:137px;width:31.500px;height:20px;background:#c9524f"></div>
<span class="t" style="left:1044px;top:138px;font-size:14px;line-height:18px;height:18px;font-weight:bold;color:#111;transform:scaleX(1.150)">X</span>

<!-- group boxes -->
<div class="grp" style="left:333px;top:220px;width:415px;height:112px"></div>
<div class="grp" style="left:333px;top:347px;width:415px;height:137px"></div>
<div class="grp" style="left:333px;top:498.500px;width:415px;height:84px"></div>
<div class="grp" style="left:757px;top:221px;width:292px;height:361px"></div>
<div class="a" style="left:334px;top:212px;width:38px;height:16px;background:#f0f0f0"></div>
<div class="a" style="left:334px;top:339px;width:63px;height:16px;background:#f0f0f0"></div>
<div class="a" style="left:334px;top:491px;width:43px;height:16px;background:#f0f0f0"></div>
<div class="a" style="left:759px;top:212px;width:42px;height:16px;background:#f0f0f0"></div>

<!-- row 1 -->
<div class="sel" style="left:409px;top:179px;width:135px;height:22.500px"></div>
<div class="btn" style="left:551.500px;top:179.500px;width:80.500px;height:24px;background:#f3f3f3;border-color:#d2d2d2"></div>
<div class="btn" style="left:640.500px;top:179.500px;width:89.500px;height:24px"></div>

<!-- source -->
<div class="a" style="left:342.500px;top:242.500px;width:12px;height:12px;border-radius:50%;background:#fff;border:1px solid #555;box-sizing:border-box"></div>
<div class="a" style="left:345.500px;top:245.500px;width:6px;height:6px;border-radius:50%;background:#111"></div>
<div class="a" style="left:342.500px;top:273px;width:12px;height:12px;border-radius:50%;background:#fff;border:1px solid #666;box-sizing:border-box"></div>
<div class="a" style="left:438px;top:239.500px;width:20.500px;height:17px;background:#d5dff0;border:1px solid #7f95b8;box-sizing:border-box"></div>
<div class="a" style="left:441.500px;top:242px;width:13px;height:12px;background:#fff;border:1px solid #555;box-sizing:border-box"></div>
<div class="inp" style="left:402px;top:268px;width:223px;height:21.500px;background:#f0f0f0;border-right-color:#ededed;border-bottom-color:#ededed"></div>
<div class="btn" style="left:634px;top:267px;width:81.500px;height:24.500px;background:#f1f1f1;border-color:#c6c6c6"></div>
<div class="inp" style="left:434px;top:300.500px;width:40px;height:20.500px;background:#f0f0f0"></div>
<div class="inp" style="left:574.500px;top:300.500px;width:36.500px;height:20.500px;background:#f0f0f0"></div>
<div class="spin" style="left:613.500px;top:300.500px;width:14.500px;height:22px"></div>

<!-- appearance -->
<div class="inp" style="left:393.500px;top:365px;width:27.500px;height:21.500px"></div>
<div class="spin" style="left:423px;top:365px;width:14.500px;height:22.500px"></div>
<div class="a" style="left:400px;top:402.500px;width:76px;height:3.500px;background:#e2e2e2;border:1px solid #d2d2d2;box-sizing:border-box"></div>
<div class="inp" style="left:495.500px;top:395.500px;width:43.500px;height:20.500px"></div>
<div class="spin" style="left:541.500px;top:395px;width:14px;height:22.500px"></div>
<div class="a" style="left:343px;top:430.500px;width:11.500px;height:12.500px;background:#fff;border:1px solid #444;box-sizing:border-box"></div>
<div class="inp" style="left:521px;top:425.500px;width:43.500px;height:20.500px"></div>
<div class="spin" style="left:567px;top:425px;width:14px;height:22.500px"></div>

<!-- position -->
<div class="inp" style="left:450px;top:518.500px;width:49.500px;height:20.500px"></div>
<div class="spin" style="left:502px;top:518px;width:14.500px;height:22.500px"></div>
<div class="sel" style="left:523.500px;top:518px;width:101.500px;height:21px"></div>
<div class="sel" style="left:662.500px;top:518px;width:73px;height:21px"></div>
<div class="inp" style="left:450px;top:551px;width:49.500px;height:20.500px"></div>
<div class="spin" style="left:502px;top:550.500px;width:14.500px;height:22.500px"></div>
<div class="sel" style="left:523.500px;top:550px;width:101.500px;height:21px"></div>
<div class="sel" style="left:662.500px;top:550px;width:73px;height:21px"></div>

<!-- bottom buttons -->
<div class="btn" style="left:330.500px;top:591.500px;width:81px;height:24.500px"></div>
<div class="btn" style="left:744px;top:591.500px;width:81px;height:24.500px"></div>
<div class="btn" style="left:833px;top:591.500px;width:128px;height:24.500px"></div>
<div class="btn" style="left:969px;top:591.500px;width:81px;height:24.500px"></div>

<!-- preview -->
<div class="inp" style="left:838px;top:238.500px;width:27.500px;height:20.500px"></div>
<div class="spin" style="left:867.500px;top:238.500px;width:15.500px;height:22px"></div>
<div class="a" id="pvbox" style="left:768px;top:268px;width:269.500px;height:305.500px;background:#fff;border:1px solid #3a3a3a;box-sizing:border-box"></div>
<svg id="pvimg" class="a" style="left:823px;top:366.800px;overflow:hidden" width="153.600" height="97.200" viewBox="0 0 153.600 97.200">
<defs>
<filter id="bl1" x="-10%" y="-10%" width="120%" height="120%"><feGaussianBlur stdDeviation="1.300"/></filter>
<filter id="bl0" x="-10%" y="-10%" width="120%" height="120%"><feGaussianBlur stdDeviation="0.550"/></filter>
<filter id="leaf" color-interpolation-filters="sRGB" x="0" y="0" width="100%" height="100%"><feTurbulence type="fractalNoise" baseFrequency="0.11 0.13" numOctaves="3" seed="7"/><feColorMatrix type="matrix" values="1.0 0 0 0 -0.24  1.2 0 0 0 -0.27  0.75 0 0 0 -0.155  0 0 0 0 1"/></filter>
<filter id="water" color-interpolation-filters="sRGB" x="0" y="0" width="100%" height="100%"><feTurbulence type="fractalNoise" baseFrequency="0.025 0.22" numOctaves="2" seed="4"/><feColorMatrix type="matrix" values="0.78 0 0 0 -0.19  0.95 0 0 0 0.115  0.95 0 0 0 0  0 0 0 0 1"/></filter>
<filter id="rock" color-interpolation-filters="sRGB" x="0" y="0" width="100%" height="100%"><feTurbulence type="fractalNoise" baseFrequency="0.09 0.3" numOctaves="3" seed="11"/><feColorMatrix type="matrix" values="1.15 0 0 0 -0.105  1.05 0 0 0 -0.155  1.05 0 0 0 -0.175  0 0 0 0 1"/></filter>
<clipPath id="cpL"><path d="M-3 52L8 54L24 60L44 66L63 68.500L58 71L46 73L52 75L63 77.500L57 80.500L30 83.500L-3 84.500Z"/></clipPath>
<clipPath id="cpR"><path d="M68 47.500L100 45.500L130 47L156 49V58.500L130 59.500L100 57L80 53Z"/></clipPath>
<linearGradient id="wsh" x1="0" y1="0" x2="0" y2="1"><stop offset="0" stop-color="#0b5a40" stop-opacity=".35"/><stop offset=".35" stop-color="#0b5a40" stop-opacity="0"/><stop offset=".7" stop-color="#0b5a40" stop-opacity=".1"/><stop offset="1" stop-color="#053524" stop-opacity=".8"/></linearGradient>
</defs>
<rect width="153.600" height="97.200" fill="#2c4429"/>
<g filter="url(#bl0)">
<rect x="0" y="0" width="153.600" height="54" filter="url(#leaf)"/>
<g filter="url(#bl1)">
<rect x="-4" y="-4" width="19" height="60" fill="#141c15" opacity=".85"/>
<ellipse cx="26" cy="30" rx="9" ry="20" fill="#1c2a1c" opacity=".7"/>
<rect x="143" y="-4" width="14" height="52" fill="#1a251b" opacity=".8"/>
<ellipse cx="78" cy="30" rx="9" ry="13" fill="#243724" opacity=".75"/>
<ellipse cx="112" cy="32" rx="12" ry="12" fill="#2a3d29" opacity=".6"/>
<ellipse cx="92" cy="8" rx="40" ry="8" fill="#6f965c" opacity=".45"/>
<ellipse cx="45" cy="14" rx="16" ry="9" fill="#5c8450" opacity=".4"/>
<ellipse cx="130" cy="14" rx="14" ry="9" fill="#5c8450" opacity=".4"/>
<ellipse cx="60" cy="37" rx="7" ry="8" fill="#a8c870"/>
<ellipse cx="58" cy="32" rx="4.500" ry="4" fill="#c6dc90"/>
<ellipse cx="84" cy="42" rx="5" ry="4" fill="#86a860" opacity=".9"/>
<ellipse cx="101" cy="36" rx="3" ry="7" fill="#8aa67a" opacity=".7"/>
</g>
<rect x="0" y="49.500" width="153.600" height="47.700" filter="url(#water)"/>
<rect x="0" y="50" width="153.600" height="47.200" fill="url(#wsh)"/>
<g filter="url(#bl1)">
<ellipse cx="108" cy="69" rx="34" ry="6" fill="#58c0a0" opacity=".75"/>
<ellipse cx="118" cy="77" rx="22" ry="2.500" fill="#7fd2b8" opacity=".7"/>
<ellipse cx="70" cy="82" rx="32" ry="4" fill="#117a56" opacity=".7"/>
<ellipse cx="45" cy="55" rx="18" ry="2.500" fill="#2db088" opacity=".8"/><path d="M16 46.500h38l-2 3.500h-36z" fill="#a27c72" opacity=".85"/><ellipse cx="108" cy="49.500" rx="5" ry="1.600" fill="#b8a898" opacity=".8"/>
</g>
<g clip-path="url(#cpR)"><rect x="60" y="42" width="95" height="20" filter="url(#rock)"/><rect x="60" y="42" width="95" height="20" fill="#2a1c18" opacity=".45"/></g>
<g clip-path="url(#cpL)"><rect x="-3" y="48" width="70" height="40" filter="url(#rock)"/><rect x="-3" y="48" width="70" height="40" fill="#7a3a3a" opacity=".22"/></g>
<path d="M98 90.500l10-5l22-1.500l18 3l6 4l-4 4l-50 1z" fill="#353c3c" filter="url(#bl1)"/>
<ellipse cx="60" cy="58" rx="4" ry="1.800" fill="#26352f"/>
<ellipse cx="66.500" cy="57.500" rx="2.500" ry="1.300" fill="#d4eadf"/>
</g>
</svg>
<span class="t" id="p0" style="left:834.0px;top:308.5px;font-size:7.4px;line-height:10px;height:10px;color:#222;transform:scaleX(0.938);font-weight:bold;">What is needed to prevent osteoporosis?</span>
<span class="t" id="p1" style="left:823.0px;top:321.7px;font-size:5.2px;line-height:7px;height:7px;color:#1a1a1a;font-weight:bold;">In addition to aging and menopause, there are other causes and</span>
<span class="t" id="p2" style="left:823.0px;top:330.5px;font-size:5.2px;line-height:7px;height:7px;color:#1a1a1a;font-weight:bold;">risks of osteoporosis. Such as not doing adequate amount of</span>
<span class="t" id="p3" style="left:823.0px;top:338.5px;font-size:5.2px;line-height:7px;height:7px;color:#1a1a1a;font-weight:bold;">physical exertion. Not getting enough calcium and vitamin D.</span>
<span class="t" id="p4" style="left:823.0px;top:346.9px;font-size:5.2px;line-height:7px;height:7px;color:#1a1a1a;font-weight:bold;">Malnutrition and underweight. Excessive smoking or alcohol</span>
<span class="t" id="p5" style="left:823.0px;top:354.9px;font-size:5.2px;line-height:7px;height:7px;color:#1a1a1a;transform:scaleX(0.979);font-weight:bold;">consumption.</span>
<span class="t" id="s1" style="left:824.1px;top:471.7px;font-size:6.4px;line-height:8px;height:8px;color:#222;transform:scaleX(0.946);font-family:'Liberation Serif',serif;-webkit-text-stroke:0.25px #222;">The rate of bone loss increases with age. Women are more</span>
<span class="t" id="s2" style="left:824.1px;top:479.2px;font-size:6.4px;line-height:8px;height:8px;color:#222;transform:scaleX(0.960);font-family:'Liberation Serif',serif;-webkit-text-stroke:0.25px #222;">prone to this degenerative problem than men. Increased bone</span>
<span class="t" id="s3" style="left:824.1px;top:486.6px;font-size:6.4px;line-height:8px;height:8px;color:#222;transform:scaleX(0.931);font-family:'Liberation Serif',serif;-webkit-text-stroke:0.25px #222;">density is a lifelong process. After the age of 16 to 18 years, the</span>
<span class="t" id="s4" style="left:824.1px;top:494.2px;font-size:6.4px;line-height:8px;height:8px;color:#222;transform:scaleX(0.987);font-family:'Liberation Serif',serif;-webkit-text-stroke:0.25px #222;">growth of bone length stops. But by the age of 20, bone</span>
<span class="t" id="s5" style="left:824.1px;top:501.8px;font-size:6.4px;line-height:8px;height:8px;color:#222;transform:scaleX(0.948);font-family:'Liberation Serif',serif;-webkit-text-stroke:0.25px #222;">formation and decay continue at the same rate. After 40 years,</span>
<span class="t" id="s6" style="left:824.1px;top:509.2px;font-size:6.4px;line-height:8px;height:8px;color:#222;transform:scaleX(0.944);font-family:'Liberation Serif',serif;-webkit-text-stroke:0.25px #222;">the level of erosion increases little by little compared to the</span>
<span class="t" id="s7" style="left:824.1px;top:517.0px;font-size:6.4px;line-height:8px;height:8px;color:#222;font-family:'Liberation Serif',serif;-webkit-text-stroke:0.25px #222;">formation. Especially in women, after menopause or</span>
<span class="t" id="s8" style="left:824.1px;top:524.8px;font-size:6.4px;line-height:8px;height:8px;color:#222;transform:scaleX(0.956);font-family:'Liberation Serif',serif;-webkit-text-stroke:0.25px #222;">menopause, the hormone called estrogen decreases in the body.</span>
<span class="t" id="s9" style="left:824.1px;top:532.3px;font-size:6.4px;line-height:8px;height:8px;color:#222;transform:scaleX(0.935);font-family:'Liberation Serif',serif;-webkit-text-stroke:0.25px #222;">As a result, the level of bone loss suddenly increases.</span>

<svg id="dlgsvg" class="a" style="left:0;top:0" width="1379" height="678" viewBox="0 0 1379 678">
<g fill="none" stroke="#333" stroke-width="1.500">
<path d="M533 188l3.600 3.600l3.600-3.600"/>
<path d="M613.500 526.500l3.600 3.600l3.600-3.600M724 526.500l3.600 3.600l3.600-3.600M613.500 558.500l3.600 3.600l3.600-3.600M724 558.500l3.600 3.600l3.600-3.600"/>
</g>
<!-- spinner glyphs -->
<g fill="none" stroke="#555" stroke-width="1.100">
<path d="M428 372.300l2.700-2.700l2.700 2.700M428 379.700l2.700 2.700l2.700-2.700"/>
<path d="M545.800 402.500l2.700-2.700l2.700 2.700M545.800 410l2.700 2.700l2.700-2.700"/>
<path d="M571.300 432.500l2.700-2.700l2.700 2.700M571.300 440l2.700 2.700l2.700-2.700"/>
<path d="M506.500 525.500l2.700-2.700l2.700 2.700M506.500 533l2.700 2.700l2.700-2.700"/>
<path d="M506.500 558l2.700-2.700l2.700 2.700M506.500 565.500l2.700 2.700l2.700-2.700"/>
<path d="M872.500 245.800l2.700-2.700l2.700 2.700M872.500 253.200l2.700 2.700l2.700-2.700"/>
<path d="M618 308l2.700-2.700l2.700 2.700M618 315.200l2.700 2.700l2.700-2.700" stroke="#999"/>
</g>
<g stroke="#c4c4c4" stroke-width="1"><path d="M424 376.300h14M542 406.300h13.500M567.500 436.300h13.500M502.500 529.300h14M502.500 561.800h14M868 249.500h15M614 311.500h14"/></g>
<!-- slider thumb -->
<path d="M471.500 397h8.800v11.500l-4.400 4.300l-4.400-4.300z" fill="#cfcfcf" stroke="#9a9a9a" stroke-width="1"/>
<!-- check -->
<path d="M345.300 436.500l2.600 3l4.400-6.300" fill="none" stroke="#111" stroke-width="1.700"/>
<!-- grip -->
<g fill="#b8c4cc"><rect x="1059" y="626" width="1.500" height="1.500"/><rect x="1056" y="626" width="1.500" height="1.500"/><rect x="1059" y="623" width="1.500" height="1.500"/></g>
</svg>
<span class="t" id="dt" style="left:640.0px;top:141.1px;font-size:15px;line-height:20px;height:20px;color:#0b2f4a;transform:scaleX(0.902);">Add Background</span>
<span class="t" id="d1" style="left:330.0px;top:183.6px;font-size:12px;line-height:16px;height:16px;color:#1a1a1a;transform:scaleX(0.857);">Saved Settings:</span>
<span class="t" id="d2" style="left:413.6px;top:182.6px;font-size:12px;line-height:16px;height:16px;color:#8a8a8a;transform:scaleX(0.888);">[Custom-not saved]</span>
<span class="t" id="d3" style="left:576.0px;top:184.0px;font-size:12px;line-height:16px;height:16px;color:#a2a2a2;transform:scaleX(0.905);">Delete</span>
<span class="t" id="d4" style="left:651.0px;top:184.0px;font-size:12px;line-height:16px;height:16px;color:#1a1a1a;transform:scaleX(0.821);">Save Settings...</span>
<span class="t" id="d5" style="left:944.6px;top:182.6px;font-size:12px;line-height:16px;height:16px;color:#2424d6;transform:scaleX(0.855);text-decoration:underline;">Page Range Options...</span>
<span class="t" id="d6" style="left:336.4px;top:212.6px;font-size:12px;line-height:16px;height:16px;color:#1a1a1a;transform:scaleX(0.857);">Source</span>
<span class="t" id="d7" style="left:358.0px;top:240.6px;font-size:12px;line-height:16px;height:16px;color:#1a1a1a;transform:scaleX(0.889);">From color</span>
<span class="t" id="d8" style="left:358.0px;top:271.0px;font-size:12px;line-height:16px;height:16px;color:#1a1a1a;transform:scaleX(0.806);">File</span>
<span class="t" id="d9" style="left:405.6px;top:270.5px;font-size:12px;line-height:16px;height:16px;color:#1a1a1a;">&lt;No source file selected&gt;</span>
<span class="t" id="d10" style="left:358.6px;top:304.0px;font-size:12px;line-height:16px;height:16px;color:#1a1a1a;transform:scaleX(0.876);">Page Number:</span>
<span class="t" id="d11" style="left:577.0px;top:303.0px;font-size:12px;line-height:16px;height:16px;color:#9a9a9a;transform:scaleX(0.750);">0%</span>
<span class="t" id="d12" style="left:654.0px;top:272.0px;font-size:12px;line-height:16px;height:16px;color:#9c9c9c;transform:scaleX(0.820);">Browse...</span>
<span class="t" id="d13" style="left:336.6px;top:339.0px;font-size:12px;line-height:16px;height:16px;color:#1a1a1a;transform:scaleX(0.887);">Appearance</span>
<span class="t" id="d15" style="left:343.4px;top:369.0px;font-size:12px;line-height:16px;height:16px;color:#1a1a1a;transform:scaleX(0.895);">Rotation:</span>
<span class="t" id="d16" style="left:396.0px;top:368.0px;font-size:12px;line-height:16px;height:16px;color:#1a1a1a;transform:scaleX(0.871);">0°</span>
<span class="t" id="d17" style="left:347.0px;top:399.0px;font-size:12px;line-height:16px;height:16px;color:#1a1a1a;transform:scaleX(0.895);">Opacity:</span>
<span class="t" id="d18" style="left:498.0px;top:398.0px;font-size:12px;line-height:16px;height:16px;color:#1a1a1a;transform:scaleX(0.801);">100%</span>
<span class="t" id="d19" style="left:358.0px;top:429.4px;font-size:12px;line-height:16px;height:16px;color:#1a1a1a;transform:scaleX(0.901);">Scale relative to target page</span>
<span class="t" id="d20" style="left:524.0px;top:428.0px;font-size:12px;line-height:16px;height:16px;color:#1a1a1a;transform:scaleX(0.814);">100%</span>
<span class="t" id="d21" style="left:344.0px;top:456.4px;font-size:12px;line-height:16px;height:16px;color:#2424d6;transform:scaleX(0.871);text-decoration:underline;">Appearance Options...</span>
<span class="t" id="d22" style="left:336.6px;top:491.0px;font-size:12px;line-height:16px;height:16px;color:#1a1a1a;transform:scaleX(0.885);">Position</span>
<span class="t" id="d23" style="left:358.0px;top:522.0px;font-size:12px;line-height:16px;height:16px;color:#1a1a1a;transform:scaleX(0.878);">Vertical Distance:</span>
<span class="t" id="d24" style="left:452.0px;top:521.0px;font-size:12px;line-height:16px;height:16px;color:#1a1a1a;transform:scaleX(0.822);">0</span>
<span class="t" id="d25" style="left:527.0px;top:521.0px;font-size:12px;line-height:16px;height:16px;color:#1a1a1a;transform:scaleX(0.837);">Inches</span>
<span class="t" id="d26" style="left:632.4px;top:522.0px;font-size:12px;line-height:16px;height:16px;color:#1a1a1a;transform:scaleX(0.942);">from</span>
<span class="t" id="d27" style="left:666.0px;top:521.0px;font-size:12px;line-height:16px;height:16px;color:#1a1a1a;transform:scaleX(0.849);">Center</span>
<span class="t" id="d28" style="left:343.6px;top:554.4px;font-size:12px;line-height:16px;height:16px;color:#1a1a1a;transform:scaleX(0.892);">Horizontal Distance:</span>
<span class="t" id="d29" style="left:452.0px;top:553.4px;font-size:12px;line-height:16px;height:16px;color:#1a1a1a;transform:scaleX(0.822);">0</span>
<span class="t" id="d30" style="left:527.0px;top:553.4px;font-size:12px;line-height:16px;height:16px;color:#1a1a1a;transform:scaleX(0.837);">Inches</span>
<span class="t" id="d31" style="left:632.4px;top:554.4px;font-size:12px;line-height:16px;height:16px;color:#1a1a1a;transform:scaleX(0.942);">from</span>
<span class="t" id="d32" style="left:666.0px;top:553.4px;font-size:12px;line-height:16px;height:16px;color:#1a1a1a;transform:scaleX(0.849);">Center</span>
<span class="t" id="d33" style="left:359.6px;top:596.0px;font-size:12px;line-height:16px;height:16px;color:#1a1a1a;transform:scaleX(0.907);">Help</span>
<span class="t" id="d34" style="left:776.6px;top:596.0px;font-size:12px;line-height:16px;height:16px;color:#1a1a1a;transform:scaleX(0.830);">OK</span>
<span class="t" id="d35" style="left:843.4px;top:596.0px;font-size:12px;line-height:16px;height:16px;color:#1a1a1a;transform:scaleX(0.922);">Apply to Multiple Files</span>
<span class="t" id="d36" style="left:993.6px;top:596.0px;font-size:12px;line-height:16px;height:16px;color:#1a1a1a;transform:scaleX(0.840);">Cancel</span>
<span class="t" id="d37" style="left:761.2px;top:212.2px;font-size:12px;line-height:16px;height:16px;color:#1a1a1a;transform:scaleX(0.855);">Preview</span>
<span class="t" id="d38" style="left:768.6px;top:242.4px;font-size:12px;line-height:16px;height:16px;color:#1a1a1a;transform:scaleX(0.833);">Preview Page</span>
<span class="t" id="d39" style="left:841.0px;top:241.5px;font-size:12px;line-height:16px;height:16px;color:#1a1a1a;transform:scaleX(0.750);">1</span>
<span class="t" id="d40" style="left:890.0px;top:242.6px;font-size:12px;line-height:16px;height:16px;color:#1a1a1a;transform:scaleX(0.929);">of 4</span>

<!-- ===== colour popup ===== -->
<div class="a" id="popup" style="left:436.500px;top:257px;width:133.200px;height:103.800px;background:#fbfbfb;box-sizing:border-box;border:1px solid #d9d9d9;border-right:1.600px solid #707070;border-bottom:1.500px solid #8e8e8e"></div>
<div class="a" style="left:440.30px;top:262.0px;width:11px;height:11px;background:#000000;"></div>
<div class="a" style="left:456.05px;top:262.0px;width:11px;height:11px;background:#b24a0c;"></div>
<div class="a" style="left:471.80px;top:262.0px;width:11px;height:11px;background:#3c3c0a;"></div>
<div class="a" style="left:487.55px;top:262.0px;width:11px;height:11px;background:#0c3c10;"></div>
<div class="a" style="left:503.30px;top:262.0px;width:11px;height:11px;background:#0b4650;"></div>
<div class="a" style="left:519.05px;top:262.0px;width:11px;height:11px;background:#0a0a82;"></div>
<div class="a" style="left:534.80px;top:262.0px;width:11px;height:11px;background:#4a44b4;"></div>
<div class="a" style="left:550.55px;top:262.0px;width:11px;height:11px;background:#404040;"></div>
<div class="a" style="left:440.30px;top:278.6px;width:11px;height:11px;background:#800a14;"></div>
<div class="a" style="left:456.05px;top:278.6px;width:11px;height:11px;background:#ff6414;"></div>
<div class="a" style="left:471.80px;top:278.6px;width:11px;height:11px;background:#808014;"></div>
<div class="a" style="left:487.55px;top:278.6px;width:11px;height:11px;background:#0ca416;"></div>
<div class="a" style="left:503.30px;top:278.6px;width:11px;height:11px;background:#0a8278;"></div>
<div class="a" style="left:519.05px;top:278.6px;width:11px;height:11px;background:#0a0af2;"></div>
<div class="a" style="left:534.80px;top:278.6px;width:11px;height:11px;background:#5c5aaa;"></div>
<div class="a" style="left:550.55px;top:278.6px;width:11px;height:11px;background:#818181;"></div>
<div class="a" style="left:440.30px;top:295.4px;width:11px;height:11px;background:#fe0a14;"></div>
<div class="a" style="left:456.05px;top:295.4px;width:11px;height:11px;background:#ffa20a;"></div>
<div class="a" style="left:471.80px;top:295.4px;width:11px;height:11px;background:#a8b816;"></div>
<div class="a" style="left:487.55px;top:295.4px;width:11px;height:11px;background:#48a862;"></div>
<div class="a" style="left:503.30px;top:295.4px;width:11px;height:11px;background:#42b2aa;"></div>
<div class="a" style="left:519.05px;top:295.4px;width:11px;height:11px;background:#4a48f2;"></div>
<div class="a" style="left:534.80px;top:295.4px;width:11px;height:11px;background:#80088c;"></div>
<div class="a" style="left:550.55px;top:295.4px;width:11px;height:11px;background:#a1a1a1;"></div>
<div class="a" style="left:440.30px;top:312.0px;width:11px;height:11px;background:#fe0af0;"></div>
<div class="a" style="left:456.05px;top:312.0px;width:11px;height:11px;background:#ffb80c;"></div>
<div class="a" style="left:471.80px;top:312.0px;width:11px;height:11px;background:#ffff16;"></div>
<div class="a" style="left:487.55px;top:312.0px;width:11px;height:11px;background:#0af016;"></div>
<div class="a" style="left:503.30px;top:312.0px;width:11px;height:11px;background:#0af0f0;"></div>
<div class="a" style="left:519.05px;top:312.0px;width:11px;height:11px;background:#16a8f0;"></div>
<div class="a" style="left:534.80px;top:312.0px;width:11px;height:11px;background:#a83a5a;"></div>
<div class="a" style="left:550.55px;top:312.0px;width:11px;height:11px;background:#bfbfbf;"></div>
<div class="a" style="left:440.30px;top:328.4px;width:11px;height:11px;background:#ffa8c2;border:1px solid rgba(0,0,0,.12);box-sizing:border-box;"></div>
<div class="a" style="left:456.05px;top:328.4px;width:11px;height:11px;background:#fdb9ae;border:1px solid rgba(0,0,0,.12);box-sizing:border-box;"></div>
<div class="a" style="left:471.80px;top:328.4px;width:11px;height:11px;background:#ffffaa;border:1px solid rgba(0,0,0,.12);box-sizing:border-box;"></div>
<div class="a" style="left:487.55px;top:328.4px;width:11px;height:11px;background:#b8ffb2;border:1px solid rgba(0,0,0,.12);box-sizing:border-box;"></div>
<div class="a" style="left:503.30px;top:328.4px;width:11px;height:11px;background:#b8fff0;border:1px solid rgba(0,0,0,.12);box-sizing:border-box;"></div>
<div class="a" style="left:519.05px;top:328.4px;width:11px;height:11px;background:#a8baf8;border:1px solid rgba(0,0,0,.12);box-sizing:border-box;"></div>
<div class="a" style="left:534.80px;top:328.4px;width:11px;height:11px;background:#b2a8f2;border:1px solid rgba(0,0,0,.12);box-sizing:border-box;"></div>
<div class="a" style="left:550.55px;top:328.4px;width:11px;height:11px;background:#ffffff;border:1px solid rgba(0,0,0,.12);box-sizing:border-box;"></div>
<div class="a" style="left:549.500px;top:344.500px;width:11.500px;height:11.500px;background:#fff;border:1px solid #c9c9c9;box-sizing:border-box"></div>
<span class="t" id="d14" style="left:472.4px;top:343.0px;font-size:12px;line-height:16px;height:16px;color:#1a1a1a;transform:scaleX(0.857);">Other Color...</span>
<svg class="a" style="left:553px;top:331px" width="18" height="24" viewBox="0 0 18 24"><path d="M3.200 3.300v14l3.300-3.100l2.600 5.800l2.400-1l-2.600-5.700h4.700z" fill="#0a0a0a" stroke="#f4f4f4" stroke-width=".7" stroke-linejoin="round"/></svg>

<svg class="a" style="left:0;top:0" width="20" height="678" viewBox="0 0 20 678"><path d="M5.500 462.500l5 4.500l-5 4.500z" fill="#555"/></svg>
<div class="a" id="shade" style="left:0;top:430px;width:1379px;height:248px;pointer-events:none;background:linear-gradient(to bottom,rgba(0,0,0,0) 0,rgba(0,0,0,.03) 20%,rgba(0,0,0,.08) 50%,rgba(0,0,0,.15) 80%,rgba(0,0,0,.21) 100%)"></div>

</body></html>
